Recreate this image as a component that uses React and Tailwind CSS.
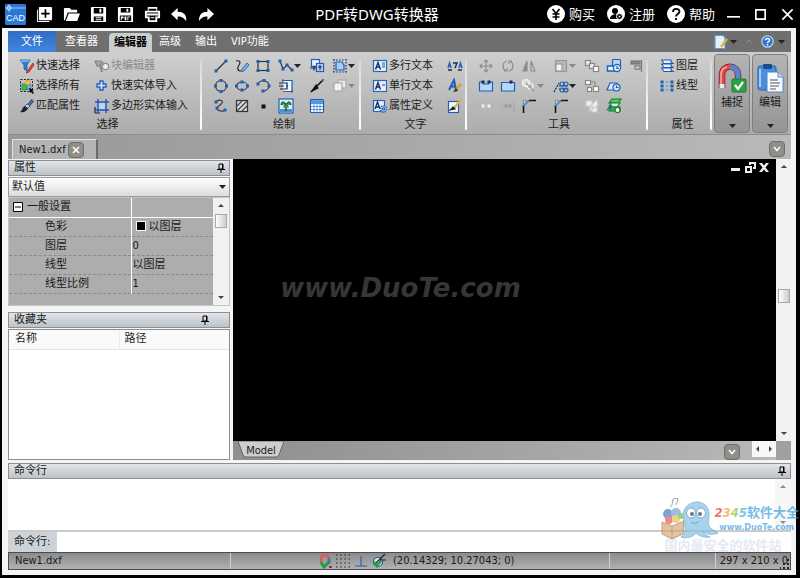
import { useState } from "react";

const BLUE = "#1f5fb8";
const NAVY = "#16305e";
const FADED = "#8d8d8d";

function Icon({ children, size = 16 }) {
  return (
    <svg width={size} height={size} viewBox="0 0 16 16" fill="none" stroke={BLUE} strokeWidth="1.2" className="shrink-0">
      {children}
    </svg>
  );
}

function Nodes({ points, color = BLUE, size = 3 }) {
  return points.map(([x, y]) => (
    <rect key={`${x}-${y}`} x={x - size / 2} y={y - size / 2} width={size} height={size} fill={color} stroke="none" />
  ));
}

const icons = {
  quickSelect: (
    <Icon>
      <path d="M1 2h10L8 7v6L5 11V7z" fill="#2f7fd0" stroke="#1c5ea8" strokeWidth=".8" />
      <path d="M2 3h8" stroke="#9fd0f5" />
      <path d="M14 5 9 12l-2 3 3-1 5-7z" fill="#e0484c" stroke="#a8252c" strokeWidth=".8" />
    </Icon>
  ),
  selectAll: (
    <Icon>
      <rect x="1.5" y="1.5" width="12" height="12" stroke="#222" strokeDasharray="2 1.4" strokeWidth="1" />
      <rect x="3" y="6" width="5" height="6" fill="#42b649" stroke="#1d8026" strokeWidth=".6" />
      <circle cx="9" cy="5" r="2.6" fill="#f5c33a" stroke="#c98d0d" strokeWidth=".6" />
      <rect x="8" y="7" width="4" height="4" fill="#7db8ef" stroke={BLUE} strokeWidth=".6" />
      <path d="m10 10 5 2-2 1 2 2-1 1-2-2-1 1z" fill="#000" stroke="none" />
    </Icon>
  ),
  match: (
    <Icon>
      <path d="m14 2-5 6" stroke="#1d3f7d" strokeWidth="3" />
      <path d="m8 6 3 2-3 3-3-2z" fill="#cfd8e6" stroke="#223" strokeWidth=".6" />
      <path d="M6 8c-3 1-2 4-5 6 4 1 7-1 8-4z" fill="#1b2230" stroke="none" />
      <path d="m14 2-4 5" stroke="#8fb5ea" strokeWidth=".8" />
    </Icon>
  ),
  blockEdit: (
    <Icon>
      <path d="M1 3h6l2 2-4 3H3z" fill="#a5a5a5" stroke="#858585" />
      <path d="m6 7 2 7" stroke="#858585" strokeWidth="2" />
      <circle cx="11.5" cy="8.5" r="3.2" fill="#ddd" stroke="#8c8c8c" />
      <path d="M11.5 6v5M9 8.500h5" stroke="#f7f7f7" />
    </Icon>
  ),
  plus: (
    <Icon>
      <path d="M6 3h3v3h3v3H9v3H6V9H3V6h3z" fill="#d5e8fb" stroke={BLUE} strokeWidth="1.3" />
    </Icon>
  ),
  polygonInput: (
    <Icon>
      <path d="M4 1v14M12 1v14M1 4h14M1 12h14" stroke="#2558ad" strokeWidth="1.4" />
      <rect x="5" y="5" width="6" height="6" fill="#b9d5f3" stroke="none" />
      <path d="M1 15V9M1 15h5" stroke={NAVY} strokeWidth="1.2" />
    </Icon>
  ),
  line: (
    <Icon>
      <path d="M3 13 13 3" stroke="#333" />
      <Nodes points={[[3, 13], [13, 3]]} />
    </Icon>
  ),
  sketch: (
    <Icon>
      <path d="M2 3c4-1 5 1 3 4s-2 6 2 6" stroke="#222" />
      <path d="m8 11 5-6 2 2-5 6-2.500.5z" fill="#78b2ea" stroke="#1e579f" strokeWidth=".8" />
    </Icon>
  ),
  rect: (
    <Icon>
      <rect x="3" y="3.500" width="10" height="9" stroke="#333" />
      <Nodes points={[[3, 3.500], [13, 3.500], [3, 12.500], [13, 12.500]]} />
    </Icon>
  ),
  polyline: (
    <Icon>
      <path d="m2 3 3 8 4-4 5 5" stroke="#333" />
      <Nodes points={[[2, 3], [5, 11], [9, 7], [14, 12]]} />
    </Icon>
  ),
  insertBlock: (
    <Icon>
      <rect x="2.500" y="1.500" width="8" height="7" fill="#e9f2fc" stroke={BLUE} />
      <rect x="7.500" y="5.500" width="7" height="8" fill="#bcd8f5" stroke={BLUE} />
      <path d="M1 10h7M5 7.500V12.500M9 9h4M11 7v5" stroke={NAVY} />
    </Icon>
  ),
  region: (
    <Icon>
      <path d="M4 4h6l2 3v5H4z" fill="#a9cdf2" stroke={BLUE} />
      <path d="M1 2h14M1 14h14M2 1v14M14 1v14" stroke={NAVY} strokeDasharray="1.500 1.500" />
    </Icon>
  ),
  circle: (
    <Icon>
      <circle cx="8" cy="8" r="5.500" stroke="#444" />
      <Nodes points={[[8, 2.500], [13.500, 8], [8, 13.500], [2.500, 8]]} />
    </Icon>
  ),
  ellipse: (
    <Icon>
      <ellipse cx="8" cy="8" rx="5.500" ry="4" stroke="#444" />
      <Nodes points={[[8, 4], [13.500, 8], [8, 12], [2.500, 8]]} />
    </Icon>
  ),
  arc: (
    <Icon>
      <path d="M3 6c2-5 11-4 11 2 0 3-3 5-6 5" stroke="#444" />
      <Nodes points={[[3, 6], [9, 2.500], [14, 8], [8, 13]]} />
    </Icon>
  ),
  solid: (
    <Icon>
      <path d="M5 2.500h9v11H5" fill="#f2f7fd" stroke={BLUE} />
      <path d="M1 5h8v6H2M1 8h5" stroke="#222" />
      <Nodes points={[[5, 2.500], [14, 13.500], [9, 8]]} size={2} />
    </Icon>
  ),
  ray: (
    <Icon>
      <path d="M2 14 14 2" stroke="#111" strokeWidth="1.600" />
      <path d="m3 13 4-6 2 3z" fill="#111" stroke="#111" />
      <Nodes points={[[14, 2]]} color="#3b8b4b" size={2} />
    </Icon>
  ),
  copyFaded: (
    <Icon>
      <rect x="6" y="2" width="8" height="8" fill="#e8e8e8" stroke="#aaa" />
      <rect x="2" y="5" width="8" height="8" fill="#f3f3f3" stroke="#aaa" />
    </Icon>
  ),
  spline: (
    <Icon>
      <path d="M3 4c2-3 8-2 6 1S3 9 4 11s6 3 8 1" stroke="#333" />
      <Nodes points={[[3, 4], [12, 12], [4, 10]]} />
    </Icon>
  ),
  hatch: (
    <Icon>
      <rect x="2.500" y="2.500" width="11" height="11" fill="#d4d8dc" stroke="#333" />
      <path d="m3 8 5-5M3 13 13 3M8 13l5-5" stroke="#444" />
    </Icon>
  ),
  point: (
    <Icon>
      <rect x="6.500" y="6.500" width="4" height="4" fill="#111" stroke="none" />
    </Icon>
  ),
  image: (
    <Icon>
      <rect x="1" y="1" width="14" height="14" fill="#dff1fc" stroke={BLUE} />
      <rect x="2" y="11" width="12" height="3" fill="#3f93d6" stroke="none" />
      <path d="M8 6v7" stroke="#5c3c18" strokeWidth="1.500" />
      <path d="M8 6C5 2 3 4 3 7c2-1 3-1 5-1zm0 0c3-4 5-2 5 1-2-1-3-1-5-1zm0 0c-2 1-2 2-2 4M8 6c2 1 2 2 2 4" fill="#199548" stroke="#12703a" strokeWidth="1" />
    </Icon>
  ),
  table: (
    <Icon>
      <rect x="1.500" y="1.500" width="13" height="13" rx="1" fill="#fff" />
      <rect x="2" y="2" width="12" height="3" fill="#5b9fe6" stroke="none" />
      <path d="M2 5.500h12M2 8.500h12M2 11.500h12M5 3v11M8 3v11M11 3v11" stroke="#3a7fd0" strokeWidth=".8" />
    </Icon>
  ),
  mtext: (
    <Icon>
      <rect x="1.500" y="2.500" width="13" height="11" fill="#e6f0fb" stroke="#2e67b4" />
      <path d="m3.500 11.500 2.500-7 2.500 7M4.500 9h3" stroke={NAVY} strokeWidth="1.400" />
      <path d="M10 5h3M10 7h3M10 9h3" stroke={BLUE} />
    </Icon>
  ),
  stext: (
    <Icon>
      <rect x="1.500" y="2.500" width="13" height="11" fill="#e6f0fb" stroke="#2e67b4" />
      <path d="m3.500 11.500 2.500-7 2.500 7M4.500 9h3" stroke={NAVY} strokeWidth="1.400" />
      <path d="M10 7h3" stroke={BLUE} />
    </Icon>
  ),
  attdef: (
    <Icon>
      <rect x="1.500" y="2.500" width="11" height="11" fill="#e6f0fb" stroke="#2e67b4" />
      <path d="m3 11 2.500-7L8 11M4 9h3" stroke={NAVY} strokeWidth="1.300" />
      <circle cx="11.500" cy="11" r="3" fill="#d8e8f8" strokeDasharray="1.300 1" strokeWidth="1.800" />
      <circle cx="11.500" cy="11" r="1.200" fill="#fff" />
    </Icon>
  ),
  findText: (
    <Icon>
      <path d="m1 10 1.500-5L4 10M1.500 8h2M12 10l1.500-5 1.500 5M12.500 8h2" stroke={BLUE} strokeWidth="1.400" />
      <path d="M6 5h4L8 10M1 12h4M11 12h4" stroke={NAVY} strokeWidth="1.400" />
    </Icon>
  ),
  styleText: (
    <Icon>
      <path d="m2 12 5-10 2 10M4 8.500h4" stroke={BLUE} strokeWidth="2" />
      <path d="m14 6-5 6" stroke="#d7a21c" strokeWidth="2.400" />
      <path d="m9 10-3 4 5-1z" fill="#333" stroke="none" />
    </Icon>
  ),
  editText: (
    <Icon>
      <rect x="1.500" y="3.500" width="10" height="11" fill="#f4f8fd" />
      <path d="m14 2-7 8" stroke="#e0b52b" strokeWidth="2.200" />
      <path d="m3 12 5-1-2-2z" fill="#222" stroke="#222" />
    </Icon>
  ),
  move: (
    <Icon>
      <path d="M8 2v12M2 8h12M6 4l2-2 2 2M6 12l2 2 2-2M4 6 2 8l2 2M12 6l2 2-2 2" stroke={FADED} />
    </Icon>
  ),
  rotate: (
    <Icon>
      <path d="M7 3C2 4 2 11 6 13M9 13c5-1 5-8 1-10M4 13h3v-3M12 3H9v3" stroke={FADED} />
    </Icon>
  ),
  mirror: (
    <Icon>
      <path d="M6 3v10H2zM10 3v10h4z" stroke={FADED} />
      <path d="M6 3v10H2z" fill={FADED} stroke="none" />
    </Icon>
  ),
  scale: (
    <Icon>
      <rect x="2.500" y="2.500" width="11" height="11" fill="#b9b9b9" stroke="#999" />
      <rect x="3" y="6" width="6" height="7" fill="#f3f3f3" stroke="#999" />
    </Icon>
  ),
  copy: (
    <Icon>
      <rect x="1.500" y="2.500" width="5" height="5" fill="#eee" stroke="#888" />
      <rect x="5.500" y="5.500" width="5" height="5" fill="#eee" stroke="#888" />
      <rect x="9.500" y="8.500" width="5" height="5" fill="#fff" stroke="#888" />
    </Icon>
  ),
  toBlock: (
    <Icon>
      <rect x="6.500" y="1.500" width="8" height="8" rx="1" fill="#b5d6f6" />
      <path d="M1.500 8h7v5h-7z" fill="#e5f1fc" stroke={BLUE} strokeWidth="1.400" />
      <circle cx="11" cy="10" r="3.600" fill="#d5e9fc" />
      <path d="M11 8v2.500h2" stroke={BLUE} />
    </Icon>
  ),
  align: (
    <Icon>
      <path d="M13.500 2v12" stroke="#777" />
      <rect x="3" y="3" width="9" height="3" fill="#888" stroke="#777" />
      <rect x="7" y="8" width="5" height="3" fill="#ddd" stroke="#777" />
    </Icon>
  ),
  breakA: (
    <Icon>
      <path d="M1.500 4h4v2h5V4h4v9h-13z" fill="#b7d7f8" stroke={BLUE} />
      <Nodes points={[[5, 4], [11, 4]]} color={NAVY} />
    </Icon>
  ),
  breakB: (
    <Icon>
      <path d="M1.500 4.500h13v8.500h-13z" fill="#b7d7f8" stroke={BLUE} />
      <Nodes points={[[11, 4]]} color={NAVY} />
    </Icon>
  ),
  offset: (
    <Icon>
      <circle cx="5" cy="5" r="3.500" fill="#ddd" stroke="#f3f3f3" />
      <circle cx="9" cy="8" r="3" stroke="#f3f3f3" />
      <path d="m5 5 8 8" stroke="#999" />
    </Icon>
  ),
  trim: (
    <Icon>
      <path d="m1 14 5-9M6 8h9M6 11h9" stroke={NAVY} strokeDasharray="2 1" />
      <circle cx="9" cy="6" r="2" />
      <circle cx="13" cy="6" r="2" />
      <circle cx="9" cy="12" r="2" />
      <circle cx="13" cy="12" r="2" />
    </Icon>
  ),
  array: (
    <Icon>
      <rect x="1.500" y="2.500" width="5" height="4" fill="#fff" stroke="#888" />
      <rect x="3.500" y="9.500" width="4" height="4" fill="#fff" stroke="#888" />
      <rect x="9.500" y="8.500" width="5" height="5" fill="#fff" stroke="#888" />
      <path d="M7 4h4v4" stroke="#888" />
    </Icon>
  ),
  shape: (
    <Icon>
      <path d="M4 5h7v7H1z" fill="#d9eafb" stroke={BLUE} />
      <circle cx="10.500" cy="9.500" r="3.500" fill="#c4dff8" />
      <path d="M10.500 7.500v2h2" stroke={BLUE} />
    </Icon>
  ),
  dots: (
    <Icon>
      <path d="M1 8h3M12 8h3" stroke="#aaa" />
      <Nodes points={[[5, 8], [11, 8]]} color="#f1f1f1" />
    </Icon>
  ),
  extend: (
    <Icon>
      <path d="M2 8h3M14 3v11" stroke="#aaa" strokeWidth="1.500" />
      <Nodes points={[[6, 8], [10, 8]]} color="#999" />
    </Icon>
  ),
  fillet: (
    <Icon>
      <path d="M2.500 15V7M8 2.500h7" stroke="#111" strokeWidth="1.600" />
      <path d="M2.500 8 8 2.500" stroke="#3c86d6" strokeWidth="1.600" />
      <path d="M2.500 6V2.500H7" stroke="#6f7d8c" strokeDasharray="1.500 1" />
    </Icon>
  ),
  explode: (
    <Icon>
      <path d="M2 3h6v5H2zM6 8l7-6 1 5-8 6zM8 9h5v5H8z" fill="#f0f0f0" stroke="#ccc" />
    </Icon>
  ),
  sheets: (
    <Icon>
      <path d="m3 5 3-4h9l-3 4z" fill="#56c964" stroke="#13802a" />
      <path d="m3 9 2-4h9l-3 4z" fill="#d5f1d9" stroke="#13802a" />
      <path d="m3 13 2-4h9v4z" fill="#35ad48" stroke="#13802a" />
      <path d="m1 12 5-5" stroke={BLUE} />
      <circle cx="11.500" cy="12" r="2.500" fill="#fff" stroke="#13802a" />
    </Icon>
  ),
  layers: (
    <Icon>
      <path d="M2 2h10v2l2 1.500H5C4 5 4 2 2 2zM2 6h10v2l2 1.500H5C4 9 4 6 2 6zM2 10h10v2l2 1.500H5c-1-.5-1-3.500-3-3.500z" fill="#eaf3fd" stroke="#1d5bb0" strokeWidth="1.100" />
    </Icon>
  ),
  linetype: (
    <Icon>
      <path d="M2 4h12M2 8h12M2 12h12" stroke="#4f93dc" strokeDasharray="3 1.500" />
      <Nodes points={[[3, 4], [13, 4], [3, 8], [13, 8], [3, 12], [13, 12]]} color="#2463b5" />
    </Icon>
  ),
};

function Caret({ color = "#222" }) {
  return (
    <svg width="7" height="4" viewBox="0 0 7 4" className="shrink-0">
      <path d="M0 0h7L3.500 4z" fill={color} />
    </svg>
  );
}

function Pin() {
  return (
    <svg width="8" height="10" viewBox="0 0 8 10" fill="none" stroke="#000">
      <path d="M2 1h4v5H2zM0 6.500h8M4 7v3M5.500 1v5" />
    </svg>
  );
}

function ScrollArrow({ dir, color = "#444" }) {
  const paths = { up: "M1 5h6L4 2z", down: "M1 3h6L4 6z", left: "M5 1v6L2 4z", right: "M3 1v6l3-3z" };
  return (
    <svg width="8" height="8" viewBox="0 0 8 8">
      <path d={paths[dir]} fill={color} />
    </svg>
  );
}

const selectTools = [
  ["快速选择", "quickSelect"],
  ["块编辑器", "blockEdit", true],
  ["选择所有", "selectAll"],
  ["快速实体导入", "plus"],
  ["匹配属性", "match"],
  ["多边形实体输入", "polygonInput"],
];

const drawTools = [
  ["直线", "line"], ["草图", "sketch"], ["矩形", "rect"], ["多段线", "polyline", "menu"], ["插入块", "insertBlock"], ["面域", "region", "menu"],
  ["圆", "circle"], ["椭圆", "ellipse"], ["圆弧", "arc"], ["实体", "solid"], ["射线", "ray"], ["复制", "copyFaded", "faded"],
  ["样条", "spline"], ["填充", "hatch"], ["点", "point"], ["图像", "image"], ["表格", "table"],
];

const textTools = [
  ["多行文本", "mtext"], ["查找", "findText", "icon"],
  ["单行文本", "stext"], ["文字样式", "styleText", "icon"],
  ["属性定义", "attdef"], ["编辑文字", "editText", "icon"],
];

const modifyTools = [
  ["移动", "move"], ["旋转", "rotate"], ["镜像", "mirror"], ["缩放", "scale", "faded"], ["复制", "copy"], ["转为块", "toBlock"], ["对齐", "align"],
  ["打断", "breakA"], ["打断于点", "breakB"], ["偏移", "offset", "faded"], ["修剪", "trim", "menu"], ["阵列", "array"], ["形状", "shape"], null,
  ["拉长", "dots"], ["延伸", "extend"], ["圆角", "fillet"], ["倒角", "fillet"], ["分解", "explode"], ["图纸", "sheets"],
];

const properties = [
  ["色彩", "以图层", true],
  ["图层", "0"],
  ["线型", "以图层"],
  ["线型比例", "1"],
];

function TextTool({ label, icon, faded }) {
  return (
    <button className={`flex h-5 items-center gap-px whitespace-nowrap ${faded ? "text-[#8a8a8a]" : ""}`}>
      {icons[icon]}
      {label}
    </button>
  );
}

function IconTool({ label, icon, menu }) {
  return (
    <button title={label} aria-label={label} className="flex h-5 items-center">
      {icons[icon]}
      {menu && <Caret color={menu === "faded" ? "#888" : "#222"} />}
    </button>
  );
}

function RibbonGroup({ title, className = "", children }) {
  return (
    <section className="flex">
      <div className={`flex flex-col justify-between pt-1 pl-[11px] ${className}`}>
        {children}
        <h2 className="pr-1 text-center leading-[18px]">{title}</h2>
      </div>
      <div className="mt-2 mb-1 w-0.5 rounded-sm bg-gradient-to-b from-[#d8d8d8] to-white" />
    </section>
  );
}

function BigButton({ label, children }) {
  return (
    <button className="flex w-9 flex-col items-center rounded-sm border border-[#7e7e7e] bg-gradient-to-b from-[#b4b4b4] to-[#959595] pt-2 pb-1">
      {children}
      <span className="mt-0.5 flex-1 leading-4">{label}</span>
      <Caret />
    </button>
  );
}

function PanelTitle({ children, pin = "pr-1" }) {
  return (
    <div className={`flex h-4 shrink-0 items-center justify-between border border-[#8b9095] bg-gradient-to-b from-[#e3e6e9] to-[#bcc2c7] pl-[5px] ${pin}`}>
      <h2>{children}</h2>
      <button aria-label="固定">
        <Pin />
      </button>
    </div>
  );
}

function TitleIcon({ label, children }) {
  return (
    <button title={label} aria-label={label}>
      <svg width="17" height="17" viewBox="0 0 18 18" fill="#fff">
        {children}
      </svg>
    </button>
  );
}

function TitleBar() {
  return (
    <header className="flex h-7 items-center bg-black pr-1.5 pl-[5px] text-white">
      <svg width="21" height="21" viewBox="0 0 21 21" role="img" aria-label="CAD" className="mr-2.5">
        <rect width="21" height="21" rx="1" fill="#2b78d8" />
        <path d="M4 0v8M0 4h21" stroke="#9cc8fa" />
        <circle cx="4" cy="4" r="2" fill="none" stroke="#cfe4fc" />
        <text x="10.500" y="17" fontSize="9" fill="#fff" textAnchor="middle" fontFamily="Liberation Sans, sans-serif">CAD</text>
      </svg>
      <div className="flex gap-2.5">
        <TitleIcon label="新建">
          <path d="M1 4h1v12h12v1H2a1 1 0 0 1-1-1z" />
          <path d="M4 1h12a1 1 0 0 1 1 1v12a1 1 0 0 1-1 1H4a1 1 0 0 1-1-1V2a1 1 0 0 1 1-1z" />
          <path d="M10 3.500v9M5.500 8h9" stroke="#000" strokeWidth="1.800" />
        </TitleIcon>
        <TitleIcon label="打开">
          <path d="M1 3a1 1 0 0 1 1-1h5l2 2h6v3H5L2 15H1zM6 8h12l-3 8H3z" />
        </TitleIcon>
        <TitleIcon label="保存">
          <path d="M2 1h14a1 1 0 0 1 1 1v15H1V2a1 1 0 0 1 1-1z" />
          <path d="M4 2h10v6H4zM4 11h10v5H4z" fill="#000" />
          <path d="M10 3h2v4h-2zM6 12h6v1H6zM6 14h6v1H6z" />
        </TitleIcon>
        <TitleIcon label="保存为 PDF">
          <path d="M2 1h14a1 1 0 0 1 1 1v15H1V2a1 1 0 0 1 1-1z" />
          <path d="M4 2h10v5H4zM3 10h12v6H3z" fill="#000" />
          <path d="M10 3h2v3h-2zM4 11h3v2H5v2H4zM8 11h2v4H8zM11 11h3v1h-2v3h-1z" />
        </TitleIcon>
        <TitleIcon label="打印">
          <path d="M4 1h10v4h3v8h-3v4H4v-4H1V5h3z" />
          <path d="M5 3h8v2H5zM3 7h12v4H3zM6 10h6v5H6z" fill="#000" />
          <path d="M3 8h12v2H3zM7 12h4v1H7z" />
        </TitleIcon>
        <TitleIcon label="撤销">
          <path d="M7 2v4c6 0 10 3 9 10-2-3-4-5-9-5v4L0 8.500z" />
        </TitleIcon>
        <TitleIcon label="重做">
          <path d="M10 2v4C4 6 1 9 1 16c2-3 4-5 9-5v4l7-6.500z" />
        </TitleIcon>
      </div>
      <h1 className="flex-1 pr-2 text-center text-[15px]">PDF转DWG转换器</h1>
      <div className="flex gap-3 text-[13px]">
        <button className="flex items-center gap-1">
          <svg width="18" height="18" viewBox="0 0 18 18">
            <circle cx="9" cy="9" r="9" fill="#fff" />
            <path d="m5.500 4 3.500 4.500L12.500 4M9 8.500V15M5.500 9h7M5.500 12h7" fill="none" stroke="#000" strokeWidth="1.600" />
          </svg>
          购买
        </button>
        <button className="flex items-center gap-1">
          <svg width="18" height="18" viewBox="0 0 18 18">
            <circle cx="9" cy="9" r="9" fill="#fff" />
            <circle cx="8" cy="6" r="3" />
            <path d="M3 14c0-4 3-4 5-5 2 1 4 1 4 5z" />
            <circle cx="12.500" cy="11.500" r="3" fill="#000" stroke="#fff" />
            <circle cx="12.500" cy="11.500" r="1" fill="#fff" />
          </svg>
          注册
        </button>
        <button className="flex items-center gap-1">
          <svg width="18" height="18" viewBox="0 0 18 18">
            <circle cx="9" cy="9" r="9" fill="#fff" />
            <path d="M6 7c0-4 6.500-4 6.500-.5C12.500 9 9 9 9 11.500M9 13v2" fill="none" stroke="#000" strokeWidth="1.800" />
          </svg>
          帮助
        </button>
      </div>
      <div className="ml-3 flex gap-3.5">
        {[
          ["最小化", "M0 9h14"],
          ["最大化", "M2 1.500h10v10H2z"],
          ["关闭", "m1.500 1 11 11M12.500 1l-11 11"],
        ].map(([label, d]) => (
          <button key={label} aria-label={label}>
            <svg width="13" height="13" viewBox="0 0 14 13" fill="none" stroke="#fff" strokeWidth="1.800">
              <path d={d} />
            </svg>
          </button>
        ))}
      </div>
    </header>
  );
}

function RibbonTabs() {
  const [active, setActive] = useState("编辑器");
  return (
    <nav className="flex h-[21px] bg-[#6f6f6f] text-white">
      <button className="mr-0.5 w-12 bg-gradient-to-b from-[#2f6cc4] to-[#3f86e0]">文件</button>
      {["查看器", "编辑器", "高级", "输出", "VIP功能"].map((tab) => (
        <button
          key={tab}
          onClick={() => setActive(tab)}
          className={
            tab === active
              ? "mt-0.5 ml-1 rounded-t-sm border border-b-0 border-[#b9cfd0] bg-[#cdcdcd] px-1 font-bold text-black"
              : "px-[7px]"
          }
        >
          {tab}
        </button>
      ))}
      <div className="ml-auto flex items-center pr-1.5">
        <button aria-label="样式" className="flex items-center gap-px">
          <Icon>
            <path d="M2 1.500h8l2 2v11H2z" fill="#e2f0fc" stroke="#5b9bd8" />
            <path d="m14 5-6 8" stroke="#d8b33c" strokeWidth="2.200" />
          </Icon>
          <Caret />
        </button>
        <svg width="8" height="5" viewBox="0 0 8 5" fill="none" stroke="#8b8b8b" className="mx-2">
          <path d="m1 4 3-3 3 3" />
        </svg>
        <button aria-label="帮助" className="flex items-center gap-1">
          <Icon size={13}>
            <circle cx="8" cy="8" r="7" fill="#2f74cc" stroke="#b9d4f1" strokeWidth="1.500" />
            <path d="M5.500 6.500c0-3 5-3 5 0 0 2-2.500 1.500-2.500 3.500M8 11v2" stroke="#fff" strokeWidth="1.700" />
          </Icon>
          <Caret />
        </button>
      </div>
    </nav>
  );
}

function Ribbon() {
  return (
    <div className="flex border-b border-[#8c8c8c] bg-gradient-to-b from-[#cfcfcf] to-[#acacac]">
      <RibbonGroup title="选择">
        <div className="grid grid-cols-[75px_auto] pr-3">
          {selectTools.map(([label, icon, faded]) => (
            <TextTool key={label} label={label} icon={icon} faded={faded} />
          ))}
        </div>
      </RibbonGroup>
      <RibbonGroup title="绘制">
        <div className="grid grid-cols-[21px_21px_23px_31px_23px_27px]">
          {drawTools.map(([label, icon, menu]) => (
            <IconTool key={label} label={label} icon={icon} menu={menu} />
          ))}
        </div>
      </RibbonGroup>
      <RibbonGroup title="文字" className="pr-0.5">
        <div className="grid grid-cols-[75px_16px]">
          {textTools.map(([label, icon, kind]) =>
            kind === "icon" ? (
              <IconTool key={label} label={label} icon={icon} />
            ) : (
              <TextTool key={label} label={label} icon={icon} />
            )
          )}
        </div>
      </RibbonGroup>
      <RibbonGroup title="工具" className="pr-0.5">
        <div className="grid grid-cols-[22px_21px_32px_31px_22px_22px_16px]">
          {modifyTools.map((tool, i) =>
            tool ? <IconTool key={tool[0]} label={tool[0]} icon={tool[1]} menu={tool[2]} /> : <span key={i} />
          )}
        </div>
      </RibbonGroup>
      <RibbonGroup title="属性">
        <div className="pr-3">
          <TextTool label="图层" icon="layers" />
          <TextTool label="线型" icon="linetype" />
        </div>
      </RibbonGroup>
      <div className="ml-0.5 flex gap-0.5 pt-0.5 pb-px">
        <BigButton label="捕捉">
          <svg width="30" height="30" viewBox="0 0 30 30" fill="none">
            <path d="M5 25V12c0-11 16-11 16 0v13" stroke="#7c1f22" strokeWidth="6.500" />
            <path d="M5 21V12c0-11 16-11 16 0" stroke="#e4494b" strokeWidth="5" />
            <path d="M13 4c5 0 8 3 8 8v12" stroke="#5585cf" strokeWidth="5" />
            <path d="M4 21v-9c0-5 3-7.500 6-8" stroke="#f7a9a5" strokeWidth="1.500" />
            <path d="M5 21v4" stroke="#e6eaf0" strokeWidth="5" />
            <rect x="15" y="16" width="14" height="13" rx="1" fill="#2fa043" stroke="#1b7a2e" />
            <path d="m18 22 3 4 5-7" stroke="#fff" strokeWidth="2.200" />
          </svg>
        </BigButton>
        <BigButton label="编辑">
          <svg width="28" height="30" viewBox="0 0 28 30" fill="none">
            <rect x="2" y="3" width="18" height="24" rx="2" fill="#4a8fdf" stroke="#2460ad" />
            <path d="M4 6v18" stroke="#a5cdf6" strokeWidth="2" />
            <rect x="7" y="1" width="9" height="5" rx="1" fill="#1d4b8c" />
            <path d="M11 9h11l5 5v15H11z" fill="#f7fafe" stroke="#4f86c9" />
            <path d="M22 9v5h5" fill="#cfe1f5" stroke="#4f86c9" />
            <path d="M14 17h8M14 20h10M14 23h9M14 26h6" stroke="#555" />
          </svg>
        </BigButton>
      </div>
    </div>
  );
}

function ChevronButton({ label }) {
  return (
    <button aria-label={label} className="grid size-4 place-items-center rounded-sm border border-[#6f6f69] bg-[#8f8f88]">
      <svg width="8" height="6" viewBox="0 0 8 6" fill="none" stroke="#fff" strokeWidth="1.500">
        <path d="m1 1 3 3.500L7 1" />
      </svg>
    </button>
  );
}

function DocumentTabs() {
  return (
    <div className="flex h-6 items-end justify-between bg-gradient-to-r from-[#989898] to-[#b9b9b9] pr-1.5 pl-1">
      <div className="flex h-5 items-center gap-0.5 border-t border-r-2 border-l border-[#e2e2e2] border-r-[#6a6a6a] bg-[#b4b4b4] pr-3 pl-1.5">
        New1.dxf
        <button aria-label="关闭 New1.dxf" className="grid size-4 place-items-center rounded-sm border border-[#6f6f69] bg-[#8f8f88]">
          <svg width="8" height="8" viewBox="0 0 8 8" stroke="#fff" strokeWidth="1.600">
            <path d="m1 1 6 6M7 1 1 7" />
          </svg>
        </button>
      </div>
      <div className="pb-0.5">
        <ChevronButton label="文档列表" />
      </div>
    </div>
  );
}

function PropertiesPanel() {
  return (
    <section>
      <PanelTitle>属性</PanelTitle>
      <div className="relative mt-px">
        <select
          aria-label="属性"
          className="h-5 w-full appearance-none border border-[#9a9a9a] bg-gradient-to-b from-white to-[#dcdcdc] px-[3px]"
        >
          <option>默认值</option>
        </select>
        <span className="pointer-events-none absolute inset-y-0 right-1 flex items-center">
          <Caret />
        </span>
      </div>
      <div className="flex border border-[#c4c4c4] bg-[#adadad]">
        <div className="flex-1 pb-[11px]">
          <table className="w-full table-fixed border-collapse">
            <tbody>
              <tr className="h-[19px] border-b border-white">
                <th className="w-[122px] border-r border-r-white p-0 pl-1 text-left font-normal">
                  <button className="flex items-center gap-1 leading-4">
                    <svg width="10" height="10" viewBox="0 0 10 10" fill="#fff" stroke="#000">
                      <path d="M.5.5h9v9h-9zM2 5h6" />
                    </svg>
                    一般设置
                  </button>
                </th>
                <td />
              </tr>
              {properties.map(([name, value, swatch]) => (
                <tr key={name} className="h-[19px] border-b border-dashed border-b-[#8a8a8a]">
                  <th className="border-r border-solid border-r-white p-0 pl-9 text-left leading-4 font-normal">{name}</th>
                  <td className="p-0 pl-px leading-4">
                    {swatch && <span className="mx-1 inline-block size-2 bg-black outline outline-white" />}
                    {value}
                  </td>
                </tr>
              ))}
            </tbody>
          </table>
        </div>
        <div className="flex w-4 flex-col items-center bg-[#f1f1f1] py-1">
          <ScrollArrow dir="up" />
          <div className="mt-1 h-3.5 w-3 border border-[#a9a9a9] bg-gradient-to-r from-white to-[#ccc]" />
          <span className="mt-auto">
            <ScrollArrow dir="down" />
          </span>
        </div>
      </div>
    </section>
  );
}

function FavoritesPanel() {
  return (
    <section className="flex flex-1 flex-col">
      <PanelTitle pin="pr-5">收藏夹</PanelTitle>
      <div className="mt-px flex-1 border border-[#8f8f8f] bg-white">
        <table className="w-full table-fixed">
          <thead>
            <tr className="h-5 border-b border-[#e4e4e4] bg-[#fafafa] text-left">
              <th className="w-[110px] border-r border-[#ececec] p-0 pl-1.5 font-normal">名称</th>
              <th className="p-0 pl-[5px] font-normal">路径</th>
            </tr>
          </thead>
        </table>
      </div>
    </section>
  );
}

function DrawingArea() {
  return (
    <main className="flex min-w-0 flex-1 flex-col">
      <div className="flex flex-1">
        <div className="flex flex-1 flex-col bg-black">
          <div className="flex h-4 items-center justify-end gap-[3px] pr-1.5">
            {[
              ["最小化窗口", "M0 6h9v3H0z"],
              ["还原窗口", "M4 0h7v7H8V5h1V2H6v1H4zM0 4h7v7H0zm2 2v3h3V6z"],
              ["关闭窗口", "M0 1h3l2 2.500L7 1h3L6.500 5.500 10 10H7L5 7.500 3 10H0l3.500-4.500z"],
            ].map(([label, d]) => (
              <button key={label} aria-label={label}>
                <svg width="11" height="11" viewBox="0 0 11 11" fill="#eee" fillRule="evenodd">
                  <path d={d} />
                </svg>
              </button>
            ))}
          </div>
          <p className="my-auto pr-52 pb-10 text-center font-['DejaVu_Sans'] text-[26px] font-bold text-[#363636] italic">
            www.DuoTe.com
          </p>
        </div>
        <div className="flex w-[15px] flex-col items-center justify-between bg-[#f1f1f1] py-1">
          <ScrollArrow dir="up" />
          <div className="mb-2 h-3.5 w-3 border border-[#a9a9a9] bg-gradient-to-r from-white to-[#ccc]" />
          <ScrollArrow dir="down" />
        </div>
      </div>
      <div className="flex h-[19px] items-stretch bg-gradient-to-r from-[#8f8f8f] to-[#b9b9b9] pl-1">
        <button className="relative w-12">
          <svg viewBox="0 0 48 17" preserveAspectRatio="none" className="absolute inset-x-0 top-0 h-[17px] w-full">
            <path d="M1 0h46l-5 14q-1 2-3 2H9q-2 0-3-2z" fill="#cdcdcd" stroke="#666" />
          </svg>
          <span className="relative">Model</span>
        </button>
        <div className="mr-3 ml-auto self-end">
          <ChevronButton label="布局列表" />
        </div>
        <div className="flex h-4 w-6 items-center justify-around bg-[#f7f7f7]">
          <ScrollArrow dir="left" />
          <ScrollArrow dir="right" />
        </div>
        <div className="w-[15px] bg-[#a0a0a0]" />
      </div>
    </main>
  );
}

// site mark with the octopus, floats over the command area
function SiteMark() {
  return (
    <div className="pointer-events-none absolute -right-2 bottom-0 flex flex-col opacity-70">
      <div className="flex items-center">
        <svg width="58" height="42" viewBox="0 0 58 42" fill="none">
          <path d="M24 24C17 2 49-4 49 17c0 8-4 11 9 18-9 3-12 0-15-2 1 3 4 5 7 6-8 1-12-2-14-4-3 4-10 6-15 4 5-2 5-8 3-15z" fill="#82c3e4" stroke="#5aa7cf" />
          <ellipse cx="31" cy="15" rx="4.500" ry="5" fill="#fff" stroke="#478aaf" />
          <ellipse cx="41" cy="15" rx="4.500" ry="5" fill="#fff" stroke="#478aaf" />
          <circle cx="32" cy="16" r="2" fill="#23455c" />
          <circle cx="40" cy="16" r="2" fill="#23455c" />
          <path d="M31 24q5 3 8-1" stroke="#3d7fa3" />
          <path d="m2 24 10 4 12-5-1 13-11 5L2 36z" fill="#d9a878" stroke="#a97a4d" />
          <path d="M12 28v13" stroke="#a97a4d" />
          <circle cx="8" cy="16" r="5" fill="#4d7bc7" />
          <circle cx="16" cy="15" r="5" fill="#6fa3df" />
          <circle cx="9" cy="22" r="4" fill="#dd5d53" />
          <circle cx="16" cy="21" r="4" fill="#e8c14f" />
          <circle cx="21" cy="18" r="3" fill="#70b95e" />
          <path d="m12 7 1-6 5-1-1 5M10 8h2M15 6h2" stroke="#6b7f92" />
        </svg>
        <div className="-ml-1 text-center">
          <p className="text-[13px] leading-4 font-bold whitespace-nowrap text-[#3d9fe0]">
            <span className="font-['DejaVu_Sans_Condensed'] italic">
              <span className="text-[#e5383b]">2</span>
              <span className="text-[#f0a52a]">3</span>
              <span className="text-[#8cc63f]">4</span>
              <span className="text-[#3fb5c9]">5</span>
            </span>
            软件大全
          </p>
          <p className="font-['DejaVu_Sans_Condensed'] text-[9px] leading-3 font-bold text-[#3d9fe0]">www.DuoTe.com</p>
        </div>
      </div>
      <p className="pl-1 text-[13px] leading-3 font-bold text-[#d9e2ec]">国内最安全的软件站</p>
    </div>
  );
}

function CommandPanel() {
  return (
    <section className="relative mt-[3px]">
      <PanelTitle>命令行</PanelTitle>
      <div className="flex h-[53px] border-b-2 border-[#cbcbcb] bg-white">
        <div className="flex-1" />
        <div className="flex w-4 flex-col items-center justify-between bg-[#f6f6f6] py-1">
          <ScrollArrow dir="up" color="#8a8a8a" />
          <ScrollArrow dir="down" color="#8a8a8a" />
        </div>
      </div>
      <div className="flex h-5 bg-white">
        <label htmlFor="command" className="flex w-[49px] items-center bg-[#ccd2d8] pl-1.5">
          命令行:
        </label>
        <input id="command" className="min-w-0 flex-1 bg-white px-1 outline-none" />
      </div>
      <SiteMark />
    </section>
  );
}

function StatusBar() {
  return (
    <footer className="relative flex h-[18px] items-stretch border border-[#4c4c4c] bg-gradient-to-b from-[#8b8b8b] to-[#b2b2b2] leading-4">
      <span className="w-[222px] border-r border-[#d0d0d0] pl-1.5">New1.dxf</span>
      <div className="ml-[86px] flex items-center gap-0.5">
        <button aria-label="对象捕捉">
          <Icon>
            <path d="M4 10V6c0-5 8-5 8 0v4" stroke="#e05a4f" strokeWidth="2.500" />
            <path d="M12 5v6" stroke="#3f71c9" strokeWidth="2.500" />
            <path d="m4 9 3 5 5-5" stroke="#1f9e3a" strokeWidth="2.800" />
            <path d="M12 14h3" stroke="#a02060" strokeWidth="2" />
          </Icon>
        </button>
        <button aria-label="栅格">
          <Icon>
            {[2, 6, 10, 14].map((y) => (
              <path key={y} d={`M1 ${y}h14`} stroke="#222" strokeDasharray="1.500 2.700" />
            ))}
          </Icon>
        </button>
        <button aria-label="正交">
          <Icon>
            <path d="M8 3v10M2 13h12" stroke="#2d5fae" />
          </Icon>
        </button>
        <button aria-label="追踪">
          <Icon>
            <circle cx="7" cy="9" r="4.500" fill="#d9efe0" stroke="#2458a8" />
            <path d="m3 9 3 4 4-5" stroke="#1f9e3a" strokeWidth="2.500" />
            <path d="M5 10 14 1M8 7h7" stroke="#222" />
          </Icon>
        </button>
      </div>
      <span className="ml-1.5 whitespace-nowrap">(20.14329; 10.27043; 0)</span>
      <div className="ml-auto w-[106px] border-l border-[#d0d0d0]" />
      <span className="border-l border-[#d0d0d0] pr-0.5 pl-1 whitespace-nowrap">297 x 210 x 0</span>
      <svg width="10" height="10" viewBox="0 0 10 10" className="absolute right-0 bottom-0">
        <path d="M7 0h2v2H7zM3 4h2v2H3zM7 4h2v2H7zM0 8h1v2H0zM3 8h2v2H3zM7 8h2v2H7z" fill="#222" />
      </svg>
    </footer>
  );
}

export default function App() {
  return (
    <div className="flex min-h-screen flex-col overflow-hidden bg-black font-['DejaVu_Sans_Condensed','Noto_Sans_CJK_SC',sans-serif] text-[11px] leading-4 text-[#1a1a1a]">
      <div className="font-['Noto_Sans','Noto_Sans_CJK_SC',sans-serif]">
        <TitleBar />
      </div>
      <div className="mr-1 mb-[3px] ml-0.5 flex flex-1 flex-col bg-[#f4f4f4] pt-[3px] pr-[5px] pb-[5px] pl-1.5">
        <RibbonTabs />
        <Ribbon />
        <DocumentTabs />
        <div className="flex flex-1 gap-[3px]">
          <aside className="flex w-[222px] shrink-0 flex-col gap-1.5 pt-px">
            <PropertiesPanel />
            <FavoritesPanel />
          </aside>
          <DrawingArea />
        </div>
        <CommandPanel />
        <StatusBar />
      </div>
    </div>
  );
}
